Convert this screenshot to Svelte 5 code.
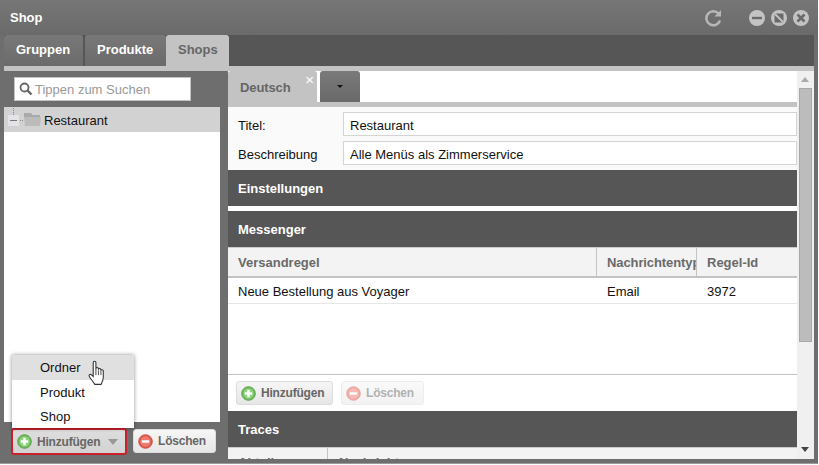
<script>
	let tabs = ['Gruppen', 'Produkte', 'Shops'];
	let menu = ['Ordner', 'Produkt', 'Shop'];
</script>

{#snippet addIcon()}
	<svg class="ico" viewBox="0 0 16 16">
		<circle cx="8" cy="8" r="7.300" fill="#6cbb5a" stroke="#4b9440" stroke-width=".8" />
		<circle cx="8" cy="8" r="5.500" fill="#8ed27c" />
		<path d="M8 4v8M4 8h8" stroke="#fff" stroke-width="2.600" />
	</svg>
{/snippet}

{#snippet delIcon()}
	<svg class="ico" viewBox="0 0 16 16">
		<circle cx="8" cy="8" r="7.300" fill="#e2574c" stroke="#c4423a" stroke-width=".8" />
		<circle cx="8" cy="8" r="5.500" fill="#ee7a6e" />
		<path d="M4 8h8" stroke="#fff" stroke-width="2.600" />
	</svg>
{/snippet}

<div class="window">
	<div class="frame">
		<header class="title">
			<span class="title-text">Shop</span>
			<div class="title-tools">
				<svg class="reload" viewBox="0 0 18 18">
					<path d="M14.500 4.500A7 7 0 1 0 16 11.500" fill="none" stroke="#b8b8b8" stroke-width="2.400" />
					<path d="M10.500 7.500h6.500V1z" fill="#b8b8b8" />
				</svg>
				<div class="controls">
					<svg viewBox="0 0 16 16"><circle cx="8" cy="8" r="8" fill="#c3c3c3" /><path d="M3 8h10" stroke="#6a6a6a" stroke-width="2.400" /></svg>
					<svg viewBox="0 0 16 16"><circle cx="8" cy="8" r="8" fill="#c3c3c3" /><path d="M3.500 3.500h9v9h-9z" fill="#6a6a6a" /><path d="M3.500 3.500l9 9" stroke="#c3c3c3" stroke-width="1.800" /></svg>
					<svg viewBox="0 0 16 16"><circle cx="8" cy="8" r="8" fill="#c3c3c3" /><path d="M4.500 4.500l7 7M11.500 4.500l-7 7" stroke="#6a6a6a" stroke-width="2.600" /></svg>
				</div>
			</div>
		</header>

		<nav class="tabs">
			{#each tabs as tab}
				<div class="tab" class:active={tab === 'Shops'}>{tab}</div>
			{/each}
		</nav>
		<div class="strip"></div>

		<div class="body">
			<aside class="left">
				<div class="search-row">
					<div class="search">
						<svg viewBox="0 0 14 14" class="lens">
							<circle cx="5.500" cy="5.500" r="4" fill="none" stroke="#666" stroke-width="1.800" />
							<path d="M8.500 8.500l4 4" stroke="#666" stroke-width="2.400" />
						</svg>
						<span>Tippen zum Suchen</span>
					</div>
				</div>
				<div class="tree">
					<div class="node">
						<span class="toggle"><i class="dots"></i></span>
						<svg class="folder" viewBox="0 0 17 13">
							<path d="M0 0h7l1.500 2H16v2H0z" fill="#a9a9a9" />
							<path d="M0 4h17l-1 9H1z" fill="#bbb" />
						</svg>
						<span>Restaurant</span>
					</div>
				</div>
				<div class="left-foot">
					<button class="btn add-main">
						{@render addIcon()}
						<span>Hinzufügen</span>
						<i class="caret"></i>
					</button>
					<button class="btn del-main">
						{@render delIcon()}
						<span>Löschen</span>
					</button>
				</div>
				<div class="menu">
					{#each menu as item, i}
						<div class="menu-item" class:hover={i === 0}>{item}</div>
					{/each}
				</div>
				<svg class="hand" viewBox="0 0 18 24">
					<path d="M5.500 2.500c0-1.800 2.500-1.800 2.500 0V9l0-1c0-1.500 2.300-1.500 2.300 0v1c0-1.500 2.300-1.500 2.300 0v1c0-1.300 2.200-1.300 2.200 0v6c0 3-1.500 5.500-2 6.500H7c-1-1.800-3.300-4.500-5-7-1-1.500.6-3 2-1.800l1.500 1.500z" fill="#fff" stroke="#333" stroke-width="1" />
					<path d="M8 9v5M10.300 9.500v4.500M12.600 10v4" stroke="#333" stroke-width=".8" />
				</svg>
			</aside>

			<main class="right">
				<div class="content">
					<div class="lang-tabs">
						<div class="lang">Deutsch<span class="x">×</span></div>
						<div class="lang-more"><i></i></div>
					</div>
					<div class="lang-strip"></div>
					<div class="form">
						<div class="field"><label for="t">Titel:</label><input id="t" value="Restaurant" /></div>
						<div class="field"><label for="b">Beschreibung</label><input id="b" value="Alle Menüs als Zimmerservice" /></div>
					</div>
					<div class="section">Einstellungen</div>
					<div class="section second">Messenger</div>
					<div class="thead">
						<div class="c1">Versandregel</div>
						<div class="c2">Nachrichtentyp</div>
						<div class="c3">Regel-Id</div>
					</div>
					<div class="trow">
						<div class="c1">Neue Bestellung aus Voyager</div>
						<div class="c2">Email</div>
						<div class="c3">3972</div>
					</div>
					<div class="tfill"></div>
					<div class="toolbar">
						<button class="btn">{@render addIcon()}<span>Hinzufügen</span></button>
						<button class="btn disabled">{@render delIcon()}<span>Löschen</span></button>
					</div>
					<div class="section">Traces</div>
					<div class="thead traces">
						<div class="t1">Abteilung</div>
						<div class="t2">Nachricht</div>
					</div>
				</div>
				<div class="scrollbar">
					<i class="up"></i>
					<div class="thumb"></div>
					<i class="down"></i>
				</div>
			</main>
		</div>
	</div>
</div>

<style>
	:global(body) {
		margin: 0;
		background: #fff;
	}

	.window {
		width: 819px;
		height: 465px;
		overflow: hidden;
		font-family: "Liberation Sans", Arial, sans-serif;
		font-size: 13px;
		color: #111;
	}

	.frame {
		width: 818px;
		height: 464px;
		box-sizing: border-box;
		padding: 0 4px 4px;
		display: flex;
		flex-direction: column;
		background: #6e6e6e;
		border-bottom: 1px solid #9a9a9a;
	}

	.title {
		height: 35px;
		flex: none;
		display: flex;
		align-items: center;
		justify-content: space-between;
		margin: 0 -4px;
		padding: 0 3px 0 10px;
		background: linear-gradient(#767676, #6a6a6a);
	}

	.title-text {
		color: #fff;
		font-weight: bold;
		font-size: 13px;
	}

	.title-tools {
		display: flex;
		align-items: center;
		gap: 27px;
	}

	.reload {
		width: 18px;
		height: 18px;
	}

	.controls {
		display: flex;
		gap: 6px;
		margin-right: 6px;
	}

	.controls svg {
		width: 16px;
		height: 16px;
	}

	.tabs {
		height: 31px;
		flex: none;
		display: flex;
		background: #565656;
	}

	.tab {
		box-sizing: border-box;
		height: 31px;
		width: 80px;
		margin-right: 2px;
		padding-left: 12px;
		line-height: 29px;
		font-weight: bold;
		font-size: 13px;
		color: #fff;
		background: linear-gradient(#787878, #6b6b6b);
		border-radius: 3px 3px 0 0;
	}

	.tab:nth-child(1) {
		width: 79px;
		margin-right: 1px;
	}

	.tab:nth-child(2) {
		width: 82px;
		margin-right: 0;
		border-left: 1px solid #565656;
	}

	.tab.active {
		width: 63px;
		background: #c3c3c3;
		color: #666;
	}

	.strip {
		height: 5px;
		flex: none;
		background: #c3c3c3;
	}

	.body {
		flex: 1;
		min-height: 0;
		display: flex;
		gap: 8px;
	}

	.left {
		position: relative;
		width: 216px;
		flex: none;
		display: flex;
		flex-direction: column;
	}

	.search-row {
		height: 36px;
		flex: none;
		padding: 6px 0 0 10px;
		box-sizing: border-box;
	}

	.search {
		box-sizing: border-box;
		width: 177px;
		height: 24px;
		display: flex;
		align-items: center;
		gap: 2px;
		padding-left: 4px;
		background: #fff;
		border: 1px solid #c3c3c3;
		color: #999;
	}

	.lens {
		width: 14px;
		height: 14px;
	}

	.tree {
		flex: 1;
		background: #fff;
	}

	.node {
		position: relative;
		height: 25px;
		box-sizing: border-box;
		padding-top: 1px;
		display: flex;
		align-items: center;
		background: #d2d2d2;
		color: #111;
	}

	/* expander box with its dotted connectors */
	.toggle {
		position: relative;
		width: 20px;
		height: 25px;
		flex: none;
		align-self: flex-start;
		margin-top: -1px;
	}

	.toggle::before {
		content: '';
		position: absolute;
		left: 4px;
		top: 8px;
		width: 11px;
		height: 11px;
		background: linear-gradient(#777, #777) center / 7px 1px no-repeat #e3e3e8;
	}

	.toggle::after {
		content: '';
		position: absolute;
		left: 9px;
		top: 1px;
		width: 1px;
		height: 7px;
		background: repeating-linear-gradient(#888 0 1px, transparent 1px 2px);
	}

	.dots {
		position: absolute;
		left: 16px;
		top: 13px;
		width: 3px;
		height: 1px;
		background: repeating-linear-gradient(90deg, #888 0 1px, transparent 1px 2px);
	}

	.folder {
		width: 17px;
		height: 13px;
		flex: none;
		margin-right: 3px;
		margin-top: -1px;
	}

	.left-foot {
		height: 37px;
		flex: none;
		box-sizing: border-box;
		display: flex;
		align-items: flex-start;
		gap: 6px;
		padding: 6px 0 0 7px;
	}

	.btn {
		box-sizing: border-box;
		height: 24px;
		display: inline-flex;
		align-items: center;
		gap: 5px;
		padding: 0 5px;
		font: bold 12px "Liberation Sans", Arial, sans-serif;
		letter-spacing: -0.2px;
		color: #666;
		background: linear-gradient(#f6f6f6, #e6e6e6);
		border: 1px solid #dcdcdc;
		border-radius: 3px;
	}

	.ico {
		width: 15px;
		height: 15px;
		flex: none;
	}

	.add-main {
		width: 116px;
		height: 27px;
		border: 2px solid #c8202c;
		background: linear-gradient(#dedede, #d2d2d2);
		padding-left: 4px;
	}

	.del-main {
		width: 83px;
		margin-top: 1px;
		padding-left: 4px;
	}

	.caret {
		width: 0;
		height: 0;
		margin-left: 3px;
		border: 5px solid transparent;
		border-top: 6px solid #999;
		border-bottom: 0;
	}

	.menu {
		position: absolute;
		left: 8px;
		bottom: 31px;
		width: 122px;
		background: #fff;
		box-shadow: 0 0 4px rgba(0, 0, 0, 0.45);
	}

	.menu-item {
		height: 24px;
		line-height: 26px;
		padding-left: 28px;
	}

	.menu-item.hover {
		height: 25px;
		background: #e0e0e0;
	}

	.hand {
		position: absolute;
		left: 83px;
		top: 289px;
		width: 20px;
		height: 26px;
	}

	.right {
		flex: 1;
		min-width: 0;
		display: flex;
		background: #fff;
	}

	.content {
		flex: 1;
		min-width: 0;
		overflow: hidden;
	}

	.lang-tabs {
		height: 31px;
		display: flex;
	}

	.lang {
		position: relative;
		box-sizing: border-box;
		width: 89px;
		padding-left: 12px;
		line-height: 33px;
		font-weight: bold;
		letter-spacing: -0.1px;
		color: #666;
		background: #c3c3c3;
		border-radius: 3px 3px 0 0;
	}

	.x {
		position: absolute;
		right: 3px;
		top: -8px;
		color: #fff;
		font-size: 15px;
		font-weight: normal;
	}

	.lang-more {
		width: 40px;
		margin-left: 3px;
		background: linear-gradient(#7a7a7a, #696969);
		border-radius: 3px 3px 0 0;
		display: flex;
		align-items: center;
		justify-content: center;
	}

	.lang-more i {
		border: 3px solid transparent;
		border-top: 3px solid #111;
		border-bottom: 0;
	}

	.lang-strip {
		height: 5px;
		background: #c3c3c3;
	}

	.form {
		height: 63px;
		box-sizing: border-box;
		padding-top: 5px;
		background: #fafafa;
	}

	.field {
		display: flex;
		align-items: center;
		height: 24px;
		margin-bottom: 5px;
		padding-left: 10px;
	}

	.field label {
		width: 105px;
		flex: none;
		padding-top: 2px;
	}

	.field input {
		box-sizing: border-box;
		width: 454px;
		height: 24px;
		padding: 2px 6px 0;
		border: 1px solid #d4d4d4;
		background: #fff;
		font: 13px "Liberation Sans", Arial, sans-serif;
		color: #111;
	}

	.section {
		height: 36px;
		line-height: 38px;
		padding-left: 10px;
		background: #565656;
		color: #fff;
		font-weight: bold;
	}

	.second {
		margin-top: 5px;
	}

	.thead {
		display: flex;
		height: 31px;
		line-height: 29px;
		box-sizing: border-box;
		background: #f3f3f3;
		border-top: 1px solid #ccc;
		border-bottom: 2px solid #c3c3c3;
		font-weight: bold;
		color: #6a6a6a;
	}

	.trow {
		display: flex;
		height: 26px;
		line-height: 27px;
		box-sizing: border-box;
		border-bottom: 1px solid #e6e6e6;
	}

	.c1 {
		width: 369px;
		flex: none;
		box-sizing: border-box;
		padding-left: 10px;
	}

	.c2 {
		width: 100px;
		flex: none;
		box-sizing: border-box;
		padding-left: 10px;
		overflow: hidden;
		white-space: nowrap;
	}

	.thead .c2 {
		letter-spacing: -0.1px;
	}

	.c3 {
		flex: 1;
		padding-left: 10px;
	}

	.thead .c1, .thead .c2 {
		border-right: 1px solid #c3c3c3;
	}

	.tfill {
		height: 70px;
		border-bottom: 1px solid #c3c3c3;
	}

	.toolbar {
		height: 36px;
		box-sizing: border-box;
		display: flex;
		gap: 8px;
		padding: 6px 0 0 8px;
		background: #fff;
	}

	.toolbar .btn {
		height: 24px;
		width: 97px;
		padding-left: 4px;
	}

	.toolbar .btn.disabled {
		width: 83px;
		opacity: 0.5;
	}

	.thead.traces {
		height: 40px;
	}

	.t1 {
		width: 100px;
		box-sizing: border-box;
		padding-left: 10px;
		border-right: 1px solid #c3c3c3;
		height: 40px;
	}

	.t2 {
		padding-left: 11px;
	}

	.scrollbar {
		position: relative;
		width: 17px;
		flex: none;
		background: #f0f0f0;
	}

	.thumb {
		position: absolute;
		left: 2px;
		top: 17px;
		width: 11px;
		height: 252px;
		background: #bcbcbc;
		border: 1px solid #a8a8a8;
	}

	.up, .down {
		position: absolute;
		left: 4px;
		width: 0;
		height: 0;
		border: 4px solid transparent;
	}

	.up {
		top: 6px;
		border-top: 0;
		border-bottom: 5px solid #aaa;
	}

	.down {
		bottom: 7px;
		border-bottom: 0;
		border-top: 5px solid #444;
	}
</style>
